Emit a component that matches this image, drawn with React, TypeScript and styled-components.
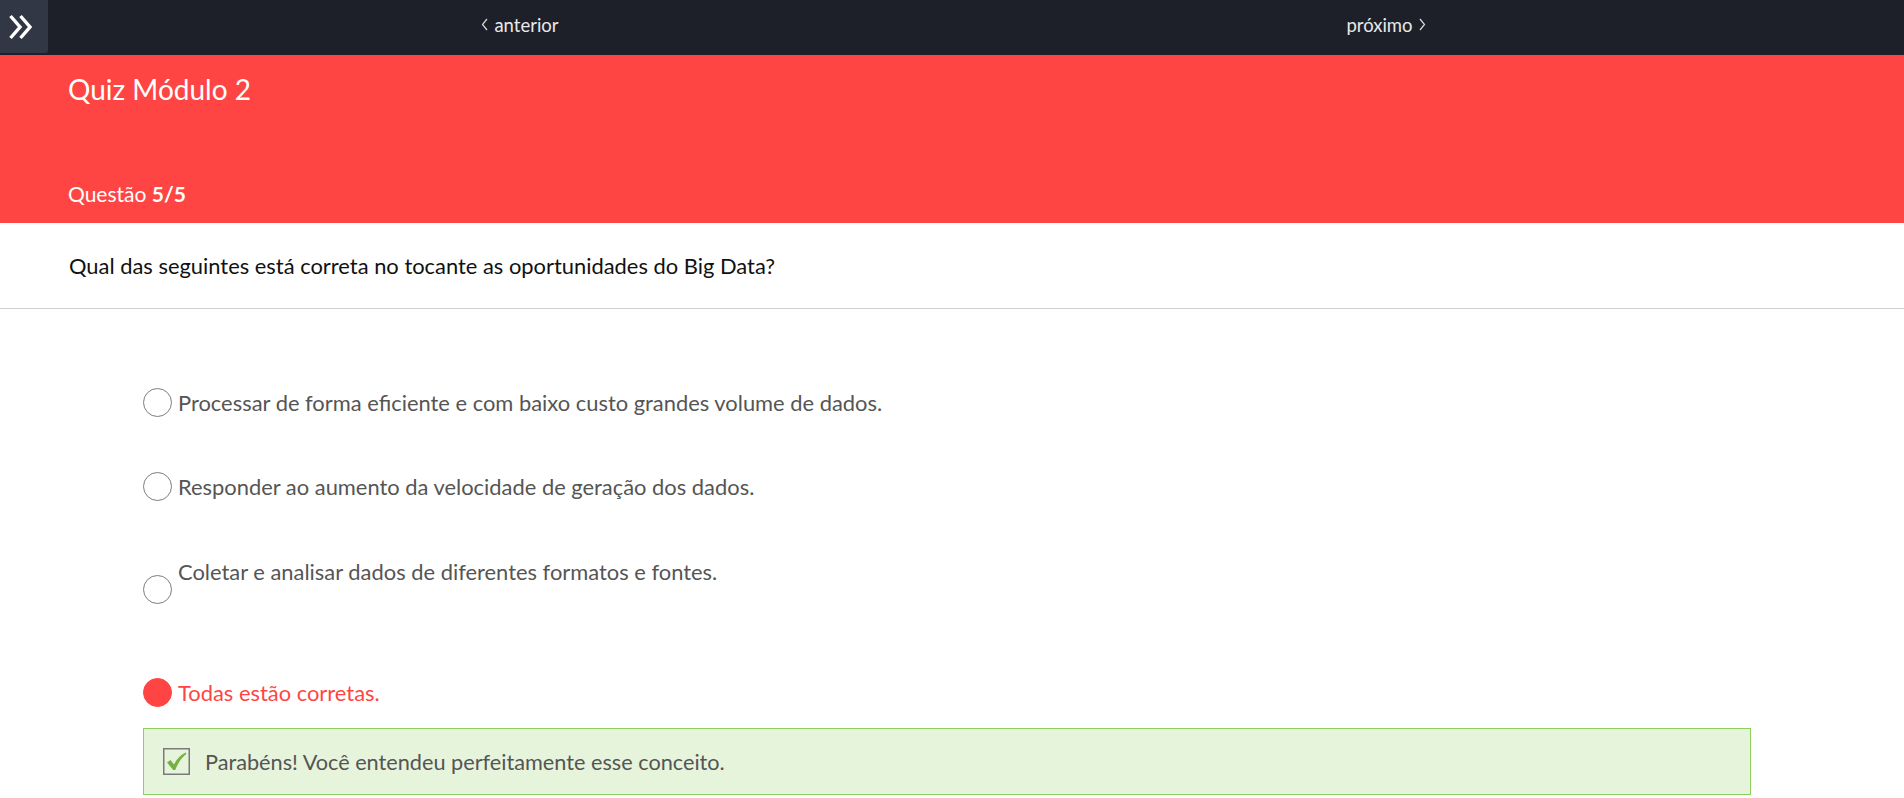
import React from "react";
import styled, { createGlobalStyle } from "styled-components";

const GlobalStyle = createGlobalStyle`
  html, body { margin: 0; padding: 0; height: 100%; overflow: hidden; }
  body { font-family: Lato, "Liberation Sans", sans-serif; background: #ffffff; }
  #root { height: 100%; }
`;

const Page = styled.div`
  display: flex;
  flex-direction: column;
  height: 100vh;
`;

const NavBar = styled.nav`
  flex: 0 0 55px;
  display: flex;
  align-items: flex-start;
  background: #1d2029;
`;

const MenuButton = styled.button`
  width: 48px;
  height: 53px;
  border: 0;
  padding: 0 7px 0 0;
  background: #313744;
  border-bottom-right-radius: 3px;
  display: flex;
  align-items: center;
  justify-content: center;
  cursor: pointer;
`;

const NavLinks = styled.div`
  flex: 1;
  height: 100%;
  display: grid;
  grid-template-columns: 1fr 1fr;
  padding: 0 85px 0 39px;
`;

const NavLink = styled.a`
  display: flex;
  align-items: center;
  justify-content: center;
  gap: 6px;
  padding-bottom: 6px;
  color: #e8e8e8;
  font-size: 18.5px;
  text-decoration: none;
`;

const Header = styled.header`
  flex: 0 0 168px;
  box-sizing: border-box;
  background: #ff4543;
  color: #ffffff;
  padding: 17px 68px;
  display: flex;
  flex-direction: column;
  justify-content: space-between;
`;

const Title = styled.h1`
  margin: 0;
  font-size: 28px;
  font-weight: 400;
  line-height: 34px;
`;

const Counter = styled.div`
  font-size: 21px;
  line-height: 24px;
  strong { font-weight: 700; }
`;

const Content = styled.main`
  flex: 1;
  overflow-y: auto;
  &::-webkit-scrollbar { width: 3px; }
  &::-webkit-scrollbar-track { background: #eeeeee; }
  &::-webkit-scrollbar-thumb { background: #c6c6c6; border-radius: 2px; }
`;

const QuestionBar = styled.div`
  height: 86px;
  box-sizing: border-box;
  border-bottom: 1px solid #cfcfcf;
  display: flex;
  align-items: center;
  padding: 0 69px;
  font-size: 21.9px;
  color: #111111;
`;

const Options = styled.div`
  padding: 79px 153px 63px 143px;
  display: flex;
  flex-direction: column;
`;

const Option = styled.label<{ $gap: number; $drop?: number; $selected?: boolean }>`
  display: flex;
  align-items: ${(p) => (p.$drop ? "flex-start" : "center")};
  margin-top: ${(p) => p.$gap}px;
  font-size: 21.9px;
  line-height: 24px;
  color: ${(p) => (p.$selected ? "#ff4543" : "#555555")};
  cursor: pointer;
`;

const Radio = styled.span<{ $drop?: number; $selected?: boolean }>`
  flex: none;
  width: 29px;
  height: 29px;
  box-sizing: border-box;
  border-radius: 50%;
  border: 1px solid ${(p) => (p.$selected ? "#ff4543" : "#7d7d7d")};
  background: ${(p) => (p.$selected ? "#ff4543" : "#ffffff")};
  margin: ${(p) => p.$drop ?? 0}px 6px 0 0;
`;

const Feedback = styled.div`
  margin-top: 21px;
  height: 67px;
  box-sizing: border-box;
  border: 1px solid #8ccf5c;
  background: #e6f4dc;
  padding: 0 19px;
  display: flex;
  align-items: center;
  gap: 15px;
  font-size: 21.7px;
  color: #555555;
`;

const ChevronLeft = () => (
  <svg width="7" height="13" viewBox="0 0 7 13">
    <polyline points="6,1 1.5,6.5 6,12" fill="none" stroke="#d8d8d8" strokeWidth="1.2" />
  </svg>
);

const ChevronRight = () => (
  <svg width="7" height="13" viewBox="0 0 7 13">
    <polyline points="1,1 5.5,6.5 1,12" fill="none" stroke="#d8d8d8" strokeWidth="1.2" />
  </svg>
);

const DoubleChevron = () => (
  <svg width="26" height="26" viewBox="0 0 26 26">
    <polyline points="2.5,2 12,13 2.5,24" fill="none" stroke="#ffffff" strokeWidth="3.4" />
    <polyline points="12.5,2 22,13 12.5,24" fill="none" stroke="#ffffff" strokeWidth="3.4" />
  </svg>
);

const CheckIcon = () => (
  <svg width="27" height="27" viewBox="0 0 27 27">
    <rect x="0.75" y="0.75" width="25.5" height="25.5" fill="none" stroke="#7a7a7a" strokeWidth="1.5" />
    <path
      d="M4 14.5 L7.5 12 L11 16.5 C13.5 11.5 17 7.5 22.5 4.5 L23.5 5.8 C18.5 9.8 15 15 12.2 22 L10.2 22 Z"
      fill="#77b043"
    />
  </svg>
);

const options = [
  { text: "Processar de forma eficiente e com baixo custo grandes volume de dados.", gap: 0 },
  { text: "Responder ao aumento da velocidade de geração dos dados.", gap: 55 },
  { text: "Coletar e analisar dados de diferentes formatos e fontes.", gap: 59, drop: 15 },
  { text: "Todas estão corretas.", gap: 74, selected: true },
];

export default function App() {
  return (
    <>
      <GlobalStyle />
      <Page>
        <NavBar>
          <MenuButton aria-label="menu">
            <DoubleChevron />
          </MenuButton>
          <NavLinks>
            <NavLink href="#">
              <ChevronLeft />
              anterior
            </NavLink>
            <NavLink href="#">
              próximo
              <ChevronRight />
            </NavLink>
          </NavLinks>
        </NavBar>
        <Header>
          <Title>Quiz Módulo 2</Title>
          <Counter>
            Questão <strong>5/5</strong>
          </Counter>
        </Header>
        <Content>
          <QuestionBar>Qual das seguintes está correta no tocante as oportunidades do Big Data?</QuestionBar>
          <Options>
            {options.map((o) => (
              <Option key={o.text} $gap={o.gap} $drop={o.drop} $selected={o.selected}>
                <Radio $drop={o.drop} $selected={o.selected} />
                {o.text}
              </Option>
            ))}
            <Feedback>
              <CheckIcon />
              Parabéns! Você entendeu perfeitamente esse conceito.
            </Feedback>
          </Options>
        </Content>
      </Page>
    </>
  );
}
